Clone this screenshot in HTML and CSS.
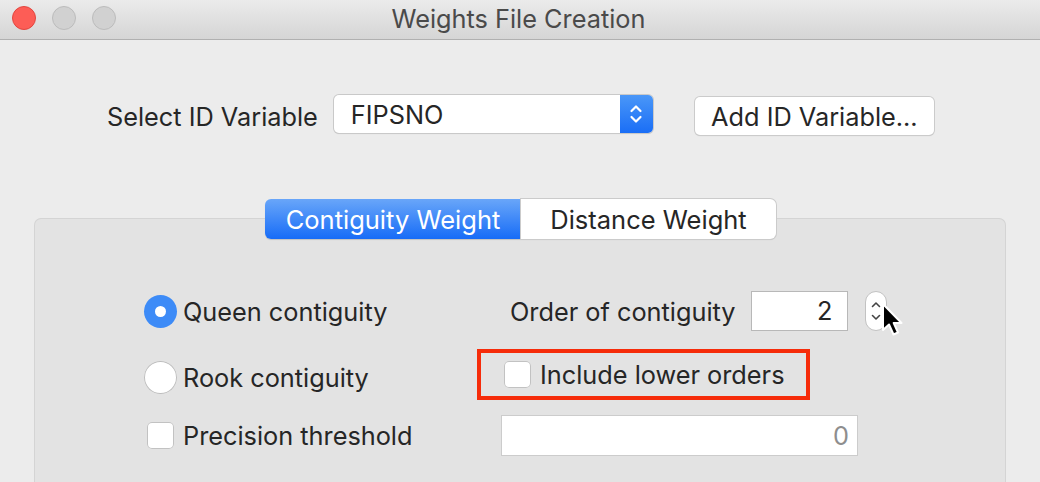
FILE: index.html
```html
<!DOCTYPE html>
<html>
<head>
<meta charset="utf-8">
<link rel="stylesheet" href="styles.css">
</head>
<body>
<div class="window">
  <div class="titlebar">
    <div class="lights">
      <span class="light red"></span>
      <span class="light grey"></span>
      <span class="light grey"></span>
    </div>
    <div class="title">Weights File Creation</div>
  </div>
  <div class="content">
    <div class="idrow">
      <span class="label">Select ID Variable</span>
      <div class="select">
        <span class="select-text">FIPSNO</span>
        <span class="select-arrows">
          <svg width="14" height="24" viewBox="0 0 14 24"><path d="M2.5 9 L7 4.5 L11.5 9 M2.5 15 L7 19.5 L11.5 15" fill="none" stroke="#fff" stroke-width="2.2" stroke-linecap="round" stroke-linejoin="round"/></svg>
        </span>
      </div>
      <div class="button">Add ID Variable...</div>
    </div>
    <div class="tabs">
      <div class="tab active">Contiguity Weight</div>
      <div class="tab">Distance Weight</div>
    </div>
    <div class="panel">
      <div class="row row1">
        <div class="left">
          <span class="radio on"></span>
          <span class="text">Queen contiguity</span>
        </div>
        <div class="right order">
          <span class="text">Order of contiguity</span>
          <div class="numbox">2</div>
          <div class="stepper">
            <svg width="14" height="30" viewBox="0 0 14 30"><path d="M3.5 10.5 L7 7 L10.5 10.5 M3.5 19.5 L7 23 L10.5 19.5" fill="none" stroke="#444" stroke-width="1.6" stroke-linecap="round" stroke-linejoin="round"/></svg>
            <svg class="cursor" width="24" height="38" viewBox="0 0 24 38"><path d="M2 2 L2 28 L8 22.5 L12.5 32.5 L17 30.5 L12.7 21 L20.5 21 Z" fill="#000" stroke="#fff" stroke-width="2" stroke-linejoin="round"/></svg>
          </div>
        </div>
      </div>
      <div class="row row2">
        <div class="left">
          <span class="radio"></span>
          <span class="text">Rook contiguity</span>
        </div>
        <div class="right highlight">
          <span class="check"></span>
          <span class="text">Include lower orders</span>
        </div>
      </div>
      <div class="row row3">
        <div class="left">
          <span class="check ml3"></span>
          <span class="text">Precision threshold</span>
        </div>
        <div class="right">
          <div class="precbox">0</div>
        </div>
      </div>
    </div>
  </div>
</div>
</body>
</html>
```
FILE: styles.css
```css
* { box-sizing: border-box; }
html, body { margin: 0; padding: 0; }
body {
  width: 1040px;
  height: 482px;
  overflow: hidden;
  background: #ececec;
  font-family: Inter, "Noto Sans", "Liberation Sans", sans-serif;
  color: #262626;
}
.window { width: 1040px; height: 482px; overflow: hidden; }
.titlebar {
  height: 40px;
  background: linear-gradient(#ebebeb, #d5d5d5);
  border-bottom: 1px solid #b0b0b0;
  display: flex;
  align-items: center;
  position: relative;
}
.lights {
  display: flex;
  gap: 16px;
  padding-left: 12px;
  margin-top: -3px;
}
.light {
  width: 24px;
  height: 24px;
  border-radius: 50%;
  display: block;
}
.light.red { background: #fd5d56; border: 1px solid #e2463f; }
.light.grey { background: #d1d1d1; border: 1px solid #bcbcbc; }
.title {
  position: absolute;
  left: 0;
  right: 3px;
  top: 3px;
  text-align: center;
  font-size: 25.3px;
  color: #4a4a4a;
}
.content { padding-top: 54px; }
.idrow {
  display: flex;
  align-items: center;
  padding-left: 107px;
  height: 40px;
}
.label { font-size: 25.3px; margin-top: 4px; }
.select {
  margin-left: 16px;
  width: 319px;
  height: 38px;
  background: #fff;
  border-radius: 5px;
  box-shadow: 0 0 0 1px #c9c9c9, 0 1px 1px rgba(0,0,0,0.15);
  display: flex;
  align-items: center;
  overflow: hidden;
}
.select-text { flex: 1; padding-left: 17px; font-size: 25.3px; }
.select-arrows {
  width: 33px;
  height: 38px;
  background: linear-gradient(#4a97f8, #1a6ef6);
  display: flex;
  align-items: center;
  justify-content: center;
}
.button {
  margin-left: 42px;
  margin-top: 4px;
  width: 239px;
  height: 38px;
  background: #fff;
  border-radius: 5px;
  box-shadow: 0 0 0 1px #cbcbcb, 0 1px 1px rgba(0,0,0,0.18);
  font-size: 25.3px;
  display: flex;
  align-items: center;
  justify-content: center;
}
.tabs {
  display: flex;
  justify-content: center;
  margin-top: 65px;
  position: relative;
  z-index: 2;
  padding-left: 1px;
}
.tab {
  width: 255px;
  height: 40px;
  background: #fff;
  font-size: 25.5px;
  display: flex;
  align-items: center;
  justify-content: center;
  box-shadow: 0 0 0 1px #cbcbcb, 0 1px 1px rgba(0,0,0,0.15);
  border-radius: 0 6px 6px 0;
}
.tab.active {
  width: 256px;
  background: linear-gradient(#69a6f9, #176cf7);
  color: #fff;
  border-radius: 6px 0 0 6px;
  box-shadow: 0 1px 1px rgba(0,0,0,0.15);
}
.panel {
  margin: -21px 34px 0 34px;
  height: 264px;
  background: #e3e3e3;
  border: 1px solid #d4d4d4;
  border-bottom: none;
  border-radius: 7px 7px 0 0;
  padding-top: 71px;
  position: relative;
  z-index: 1;
}
.row { display: flex; align-items: center; }
.row1 { height: 42px; }
.row2 { height: 51px; margin-top: 17px; }
.row3 { height: 41px; margin-top: 15px; }
.left {
  width: 442px;
  padding-left: 109px;
  display: flex;
  align-items: center;
  flex: none;
}
.row2 .left { margin-top: 5px; }
.text { font-size: 25.3px; }
.radio {
  width: 33px;
  height: 33px;
  border-radius: 50%;
  background: #fff;
  box-shadow: inset 0 0 0 1px #bdbdbd;
  margin-right: 6px;
  display: block;
  flex: none;
  position: relative;
}
.radio.on {
  background: #3d8bf7;
  box-shadow: none;
}
.radio.on::after {
  content: "";
  position: absolute;
  left: 11px;
  top: 11px;
  width: 11px;
  height: 11px;
  border-radius: 50%;
  background: #fff;
}
.check {
  width: 27px;
  height: 27px;
  border-radius: 5px;
  background: #fff;
  box-shadow: inset 0 0 0 1px #c2c2c2;
  margin-right: 9px;
  display: block;
  flex: none;
}
.check.ml3 { margin-left: 3px; margin-right: 9px; }
.right { display: flex; align-items: center; }
.order { padding-left: 33px; }
.numbox {
  margin-left: 15px;
  width: 97px;
  height: 40px;
  background: #fff;
  border: 1px solid #b8b8b8;
  font-size: 25.3px;
  text-align: right;
  padding-right: 14px;
  line-height: 38px;
}
.stepper {
  margin-left: 17px;
  width: 22px;
  height: 40px;
  background: #fff;
  border: 1px solid #c2c2c2;
  border-radius: 11px;
  display: flex;
  align-items: center;
  justify-content: center;
  position: relative;
}
.cursor {
  position: absolute;
  left: 15px;
  top: 10px;
}
.highlight {
  width: 333px;
  height: 51px;
  border: 4px solid #f62c0a;
  padding-left: 23px;
}
.precbox {
  margin-left: 24px;
  width: 357px;
  height: 41px;
  background: #fff;
  border: 1px solid #cccccc;
  font-size: 25.3px;
  color: #8e8e8e;
  text-align: right;
  padding-right: 8px;
  line-height: 39px;
}
```
